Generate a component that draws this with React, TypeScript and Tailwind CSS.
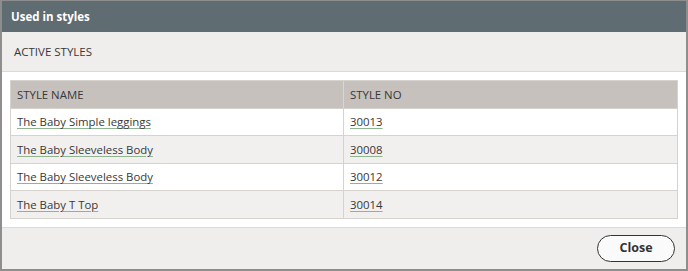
import React from "react";

const rows = [
  ["The Baby Simple leggings", "30013"],
  ["The Baby Sleeveless Body", "30008"],
  ["The Baby Sleeveless Body", "30012"],
  ["The Baby T Top", "30014"],
];

export default function App() {
  return (
    <div
      className="w-[688px] h-[271px] flex flex-col border-x-2 border-b-2 border-t border-[#8e8e8e] bg-white text-[#383838]"
      style={{ fontFamily: '"Open Sans", sans-serif' }}
    >
      <div className="h-[31px] shrink-0 bg-[#5f6c71] flex items-center px-[9px] text-white text-[11.5px] font-bold">
        Used in styles
      </div>
      <div className="h-[40px] shrink-0 bg-[#efeeec] border-b border-[#dcdad6] flex items-center px-[12px] text-[11.5px] text-[#383838]">
        ACTIVE STYLES
      </div>
      <div className="px-[8px] pt-[8px] pb-[8px] border-b border-[#dcdad6]">
        <div className="border border-[#d6d3ce] text-[11.4px]">
          <div className="grid grid-cols-[333px_1fr] h-[27px] bg-[#c6c1bc]">
            <div className="flex items-center px-[6px] border-r border-[#dad7d2]">STYLE NAME</div>
            <div className="flex items-center px-[6px]">STYLE NO</div>
          </div>
          {rows.map(([name, no], i) => (
            <div
              key={i}
              className={`grid grid-cols-[333px_1fr] border-t border-[#d6d3ce] ${
                i % 2 === 0 ? "bg-white h-[27px]" : "bg-[#f1f0ef] h-[28px]"
              }`}
            >
              <div className="flex items-center px-[6px] border-r border-[#d6d3ce]">
                <a className="underline decoration-[#8fb48f] underline-offset-[1.5px] text-[#383838]">{name}</a>
              </div>
              <div className="flex items-center px-[6px]">
                <a className="underline decoration-[#8fb48f] underline-offset-[1.5px] text-[#383838]">{no}</a>
              </div>
            </div>
          ))}
        </div>
      </div>
      <div className="flex-1 bg-[#efeeec] flex items-center justify-end pr-[11px]">
        <button className="w-[78px] h-[27px] rounded-full border border-[#333] bg-[#fafafa] text-[12.5px] font-bold text-[#333]">
          Close
        </button>
      </div>
    </div>
  );
}
